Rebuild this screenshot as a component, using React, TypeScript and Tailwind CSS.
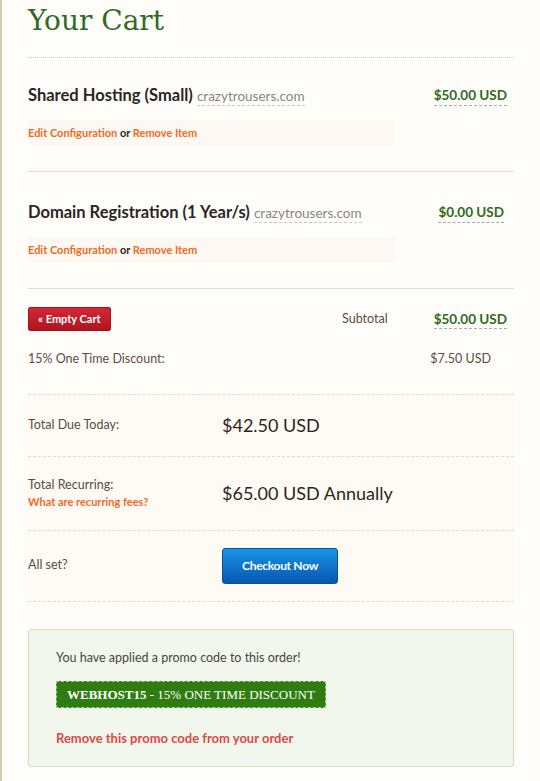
import React from "react";

const items = [
  { name: "Shared Hosting (Small)", domain: "crazytrousers.com", price: "$50.00 USD", pt: "pt-[27px]", mr: "mr-[7px]" },
  { name: "Domain Registration (1 Year/s)", domain: "crazytrousers.com", price: "$0.00 USD", pt: "pt-[30px]", mr: "mr-[10px]" },
];

const sans = { fontFamily: "Lato, 'Open Sans', sans-serif" };

export default function App() {
  return (
    <div className="min-h-[781px] w-[540px] border-l-2 border-[#d8cbb0] bg-[#fffdfa] pl-[26px] pr-[26px] text-[#3a332d]" style={sans}>
      {/* ── TITLE ───────────────────────── */}
      <h1 className="pt-[3px] font-['DejaVu_Serif',serif] text-[28px] leading-[36px] text-[#2f6b22]">Your Cart</h1>
      <div className="mt-[18px] border-t border-dotted border-[#cfcfcf]" />

      {/* ── LINE ITEMS ───────────────────── */}
      {items.map((item, i) => (
        <div key={i} className={i > 0 ? "border-t border-[#dcdcdc]" : ""}>
          <div className={`flex items-start justify-between ${item.pt}`}>
            <div className="flex items-baseline gap-[4px] leading-[20px]">
              <span className="text-[16.5px] font-bold text-[#2b2623]">{item.name}</span>
              <span className="border-b border-dashed border-[#c8c8c8] text-[13.5px] leading-[17px] text-[#8a8580]">{item.domain}</span>
            </div>
            <span className={`${item.mr} border-b border-dashed border-[#aaa] text-[13.5px] font-bold leading-[20px] text-[#2f6b22]`}>{item.price}</span>
          </div>
          <div className="mt-[14px] mb-[26px] w-[367px] bg-[#fdf9f2] py-[6px] text-[11px] font-bold leading-[13px]">
            <span className="text-[#f26a1f]">Edit Configuration</span>
            <span className="text-[#2b2623]"> or </span>
            <span className="text-[#f26a1f]">Remove Item</span>
          </div>
        </div>
      ))}

      {/* ── SUBTOTAL ─────────────────────── */}
      <div className="border-t border-[#dcdcdc] pt-[18px]">
        <div className="flex items-center">
          <button className="h-[24px] rounded-[2px] border border-[#9e1520] bg-gradient-to-b from-[#d42638] to-[#b0151f] px-[9px] text-[11px] font-bold text-white">
            « Empty Cart
          </button>
          <span className="ml-auto text-[12.5px] text-[#5a4c40]">Subtotal</span>
          <span className="ml-[46px] mr-[7px] border-b border-dashed border-[#aaa] text-[13.5px] font-bold leading-[18px] text-[#2f6b22]">$50.00 USD</span>
        </div>
        <div className="mt-[19px] flex items-center justify-between pb-[25px] text-[12.5px] text-[#5a4c40]">
          <span>15% One Time Discount:</span>
          <span className="mr-[23px]">$7.50 USD</span>
        </div>
      </div>

      {/* ── TOTALS ──────────────────────── */}
      <div className="bg-[#fefaf4]">
        <div className="flex h-[62px] items-center border-t border-dashed border-[#e8d8c4]">
          <span className="w-[194px] text-[12.5px] text-[#5a4c40]">Total Due Today:</span>
          <span className="text-[18px] text-[#2b2623]">$42.50 USD</span>
        </div>
        <div className="flex h-[74px] items-center border-t border-dashed border-[#e8d8c4]">
          <div className="w-[194px]">
            <div className="text-[12.5px] leading-[16px] text-[#5a4c40]">Total Recurring:</div>
            <div className="mt-[2px] text-[11px] font-bold leading-[14px] text-[#f26a1f]">What are recurring fees?</div>
          </div>
          <span className="text-[18px] text-[#2b2623]">$65.00 USD Annually</span>
        </div>
        <div className="flex h-[72px] items-center border-t border-b border-dashed border-[#e8d8c4]">
          <span className="w-[194px] text-[12.5px] text-[#5a4c40]">All set?</span>
          <button className="h-[36px] w-[116px] rounded-[3px] border border-[#0b4f9e] bg-gradient-to-b from-[#1a95e6] to-[#0a56b0] text-[12px] font-bold tracking-[-0.3px] text-white">
            Checkout Now
          </button>
        </div>
      </div>

      {/* ── PROMO ───────────────────────── */}
      <div className="mt-[27px] rounded-[3px] border border-[#cce3b6] bg-[#f1f7ec] px-[27px] pt-[20px] pb-[20px]">
        <p className="text-[12.5px] leading-[16px] text-[#4a4540]">You have applied a promo code to this order!</p>
        <div className="mt-[15px] inline-block border border-dashed border-[#9fd08a] bg-[#2f7d12] px-[10px] py-[5px] font-['Liberation_Serif',serif] text-[13px] leading-[15px] text-white">
          <span className="font-bold">WEBHOST15</span> - 15% ONE TIME DISCOUNT
        </div>
        <p className="mt-[22px] text-[13px] font-bold leading-[16px] text-[#e04848]">Remove this promo code from your order</p>
      </div>
    </div>
  );
}
